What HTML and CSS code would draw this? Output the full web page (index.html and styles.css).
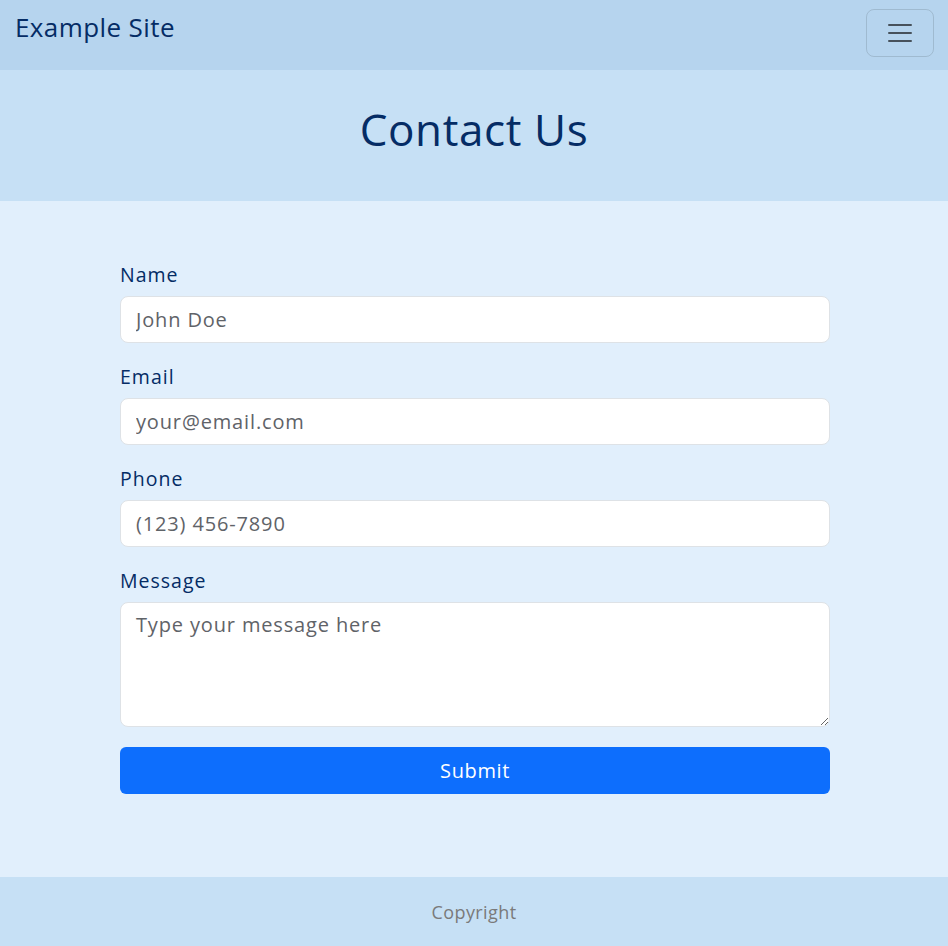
FILE: index.html
```html
<!DOCTYPE html>
<html lang="en">
<head>
<meta charset="utf-8">
<title>Contact Us</title>
<link rel="stylesheet" href="styles.css">
</head>
<body>
<nav class="navbar">
  <a class="brand" href="#">Example Site</a>
  <button class="toggler" type="button" aria-label="Toggle navigation">
    <svg width="30" height="30" viewBox="0 0 30 30"><path d="M4 7h22M4 15h22M4 23h22" stroke="rgba(33,37,41,0.75)" stroke-width="2" stroke-linecap="round"/></svg>
  </button>
</nav>
<header class="hero">
  <h1>Contact Us</h1>
</header>
<main class="main">
  <form class="form">
    <div class="field">
      <label for="name">Name</label>
      <input id="name" type="text" placeholder="John Doe">
    </div>
    <div class="field">
      <label for="email">Email</label>
      <input id="email" type="email" placeholder="your@email.com">
    </div>
    <div class="field">
      <label for="phone">Phone</label>
      <input id="phone" type="tel" placeholder="(123) 456-7890">
    </div>
    <div class="field">
      <label for="msg">Message</label>
      <textarea id="msg" rows="3" placeholder="Type your message here"></textarea>
    </div>
    <button class="submit" type="submit">Submit</button>
  </form>
</main>
<footer class="footer">Copyright</footer>
</body>
</html>
```
FILE: styles.css
```css
* { box-sizing: border-box; }
html, body { margin: 0; padding: 0; }
body {
  font-family: "Open Sans", "DejaVu Sans", sans-serif;
  color: #052c65;
  background: #e1effc;
  min-height: 946px;
  display: flex;
  flex-direction: column;
}
.navbar {
  height: 70px;
  background: #b6d4ee;
  display: flex;
  justify-content: space-between;
  align-items: flex-start;
  padding: 9px 14px 0 15px;
}
.brand {
  color: #052c65;
  text-decoration: none;
  font-size: 26px;
  letter-spacing: 0.4px;
  line-height: 36px;
}
.toggler {
  width: 68px;
  height: 48px;
  border: 1px solid rgba(33,37,41,0.15);
  border-radius: 8px;
  background: transparent;
  display: flex;
  align-items: center;
  justify-content: center;
  padding: 0;
}
.hero {
  height: 131px;
  background: #c6e0f5;
  display: flex;
  align-items: center;
  justify-content: center;
  padding-bottom: 14px;
}
.hero h1 {
  margin: 0;
  font-weight: 500;
  font-size: 44px;
  letter-spacing: 0.6px;
  line-height: 52px;
  color: #052c65;
}
.main {
  flex: 1;
  padding: 60px 118px 83px 120px;
}
.form {
  width: 710px;
  display: flex;
  flex-direction: column;
}
.field {
  display: flex;
  flex-direction: column;
  margin-bottom: 20px;
}
.field label {
  font-size: 19.5px;
  letter-spacing: 1px;
  line-height: 27px;
  margin-bottom: 8px;
}
.field input, .field textarea {
  font-family: inherit;
  font-size: 20px;
  letter-spacing: 0.85px;
  background: #fff;
  border: 1px solid #dee2e6;
  border-radius: 8px;
  padding: 0 15px;
  color: #212529;
}
.field input { height: 47px; }
.field textarea { height: 125px; padding-top: 8px; resize: vertical; }
input::placeholder, textarea::placeholder { color: #5f6368; }
.submit {
  height: 47px;
  background: #0d6efd;
  color: #fff;
  border: 0;
  border-radius: 6px;
  font-family: inherit;
  font-size: 20px;
  letter-spacing: 0.6px;
}
.footer {
  height: 69px;
  background: #c6e0f5;
  color: #7a7a7a;
  font-size: 18px;
  letter-spacing: 0.4px;
  display: flex;
  align-items: center;
  justify-content: center;
}
```
